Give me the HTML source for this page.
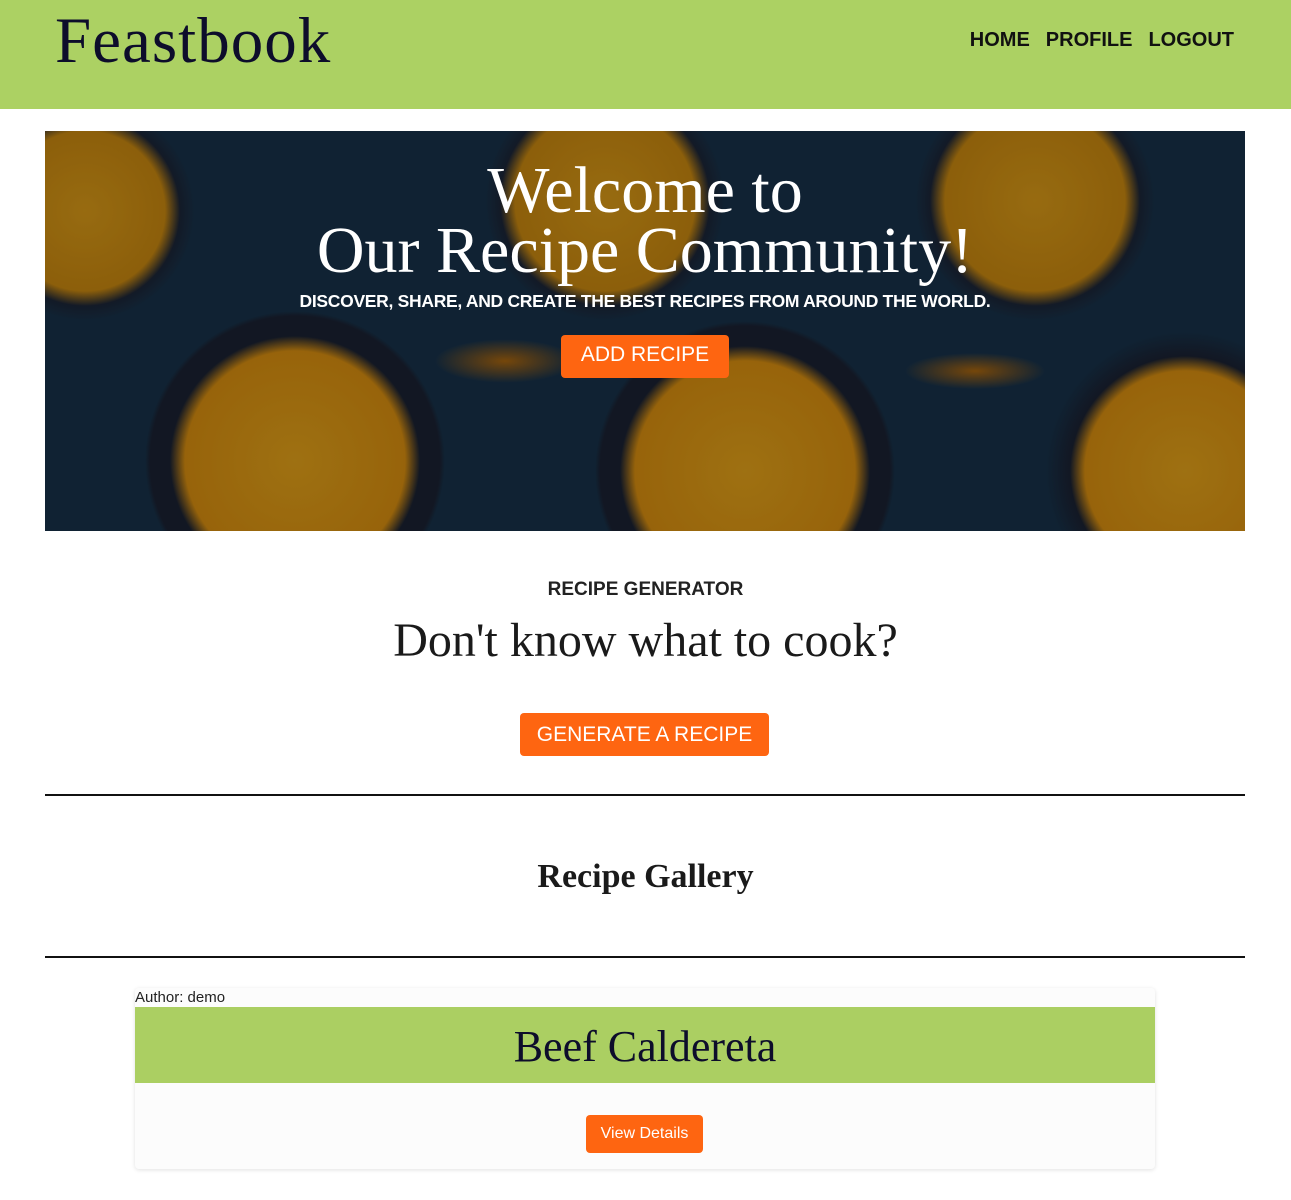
<!DOCTYPE html>
<html><head><meta charset="utf-8"><style>
*{margin:0;padding:0;box-sizing:border-box}
body{width:1291px;height:1200px;background:#fff;font-family:"Liberation Sans",sans-serif;position:relative;overflow:hidden}
header{position:absolute;left:0;top:0;width:1291px;height:109px;background:#acd163}
.logo{position:absolute;left:55px;top:4px;font-family:"Liberation Serif",serif;font-size:65px;color:#0d0d2b;letter-spacing:1px}
nav{position:absolute;right:57px;top:29px;font-size:20px;font-weight:bold;color:#111}
nav span{margin-left:16px}
.hero{position:absolute;left:45px;top:131px;width:1200px;height:400px;overflow:hidden;
background:
radial-gradient(circle at 250px 330px,#e3a21a 0,#d98f10 110px,#1a2233 125px,#1a2233 145px,transparent 150px),
radial-gradient(circle at 700px 340px,#e3a21a 0,#d98f10 110px,#1a2233 125px,#1a2233 145px,transparent 150px),
radial-gradient(circle at 1140px 340px,#e3a21a 0,#d98f10 100px,#1a2233 115px,transparent 140px),
radial-gradient(circle at 560px 70px,#d99a18 0,#c98810 90px,#1c2638 105px,transparent 120px),
radial-gradient(circle at 990px 70px,#d99a18 0,#c98810 90px,#1c2638 105px,transparent 120px),
radial-gradient(circle at 40px 80px,#d99a18 0,#c98810 80px,#1c2638 95px,transparent 110px),
radial-gradient(ellipse at 460px 230px,#a9660f 0,transparent 70px),
radial-gradient(ellipse at 930px 240px,#a9660f 0,transparent 70px),
#18324a}
.hero::after{content:"";position:absolute;inset:0;background:rgba(0,0,0,0.3)}
.hc{position:absolute;left:0;top:0;width:100%;text-align:center;color:#fff;z-index:2}
.h1{font-family:"Liberation Serif",serif;font-size:66px;line-height:60px;margin-top:30px}
.sub{font-size:17.5px;font-weight:bold;margin-top:10px;letter-spacing:-0.3px}
.btn{display:inline-block;background:#fe6511;color:#fff;border-radius:4px}
.add{font-size:21px;padding:8px 20px;margin-top:23px;height:43px}
.gen-t{position:absolute;top:579px;width:100%;text-align:center;font-size:19px;font-weight:bold;color:#222}
.gen-h{position:absolute;top:613px;width:100%;text-align:center;font-family:"Liberation Serif",serif;font-size:48px;color:#1a1a1a}
.gen-b{position:absolute;top:713px;left:520px;width:249px;height:43px;font-size:21px;text-align:center;line-height:43px}
hr{position:absolute;left:45px;width:1200px;border:0;border-top:2px solid #111}
.gal{position:absolute;top:858px;width:100%;text-align:center;font-family:"Liberation Serif",serif;font-weight:bold;font-size:34px;color:#1a1a1a}
.card{position:absolute;left:135px;top:988px;width:1020px;height:181px;background:#fcfcfc;border-radius:4px;box-shadow:0 1px 4px rgba(0,0,0,0.12)}
.auth{position:absolute;left:0;top:1px;font-size:15px;color:#222}
.ct{position:absolute;left:0;top:19px;width:1020px;height:76px;background:#abcf62;text-align:center;font-family:"Liberation Serif",serif;font-size:44px;line-height:80px;color:#0d0d2b}
.vd{position:absolute;left:451px;top:127px;width:117px;height:38px;font-size:16px;line-height:38px;text-align:center}
</style></head><body>
<header><div class="logo">Feastbook</div><nav><span>HOME</span><span>PROFILE</span><span>LOGOUT</span></nav></header>
<div class="hero"><div class="hc"><div class="h1">Welcome to<br>Our Recipe Community!</div><div class="sub">DISCOVER, SHARE, AND CREATE THE BEST RECIPES FROM AROUND THE WORLD.</div><div class="btn add">ADD RECIPE</div></div></div>
<div class="gen-t">RECIPE GENERATOR</div>
<div class="gen-h">Don't know what to cook?</div>
<div class="btn gen-b">GENERATE A RECIPE</div>
<hr style="top:794px">
<div class="gal">Recipe Gallery</div>
<hr style="top:956px">
<div class="card"><div class="auth">Author: demo</div><div class="ct">Beef Caldereta</div><div class="btn vd">View Details</div></div>
</body></html>
